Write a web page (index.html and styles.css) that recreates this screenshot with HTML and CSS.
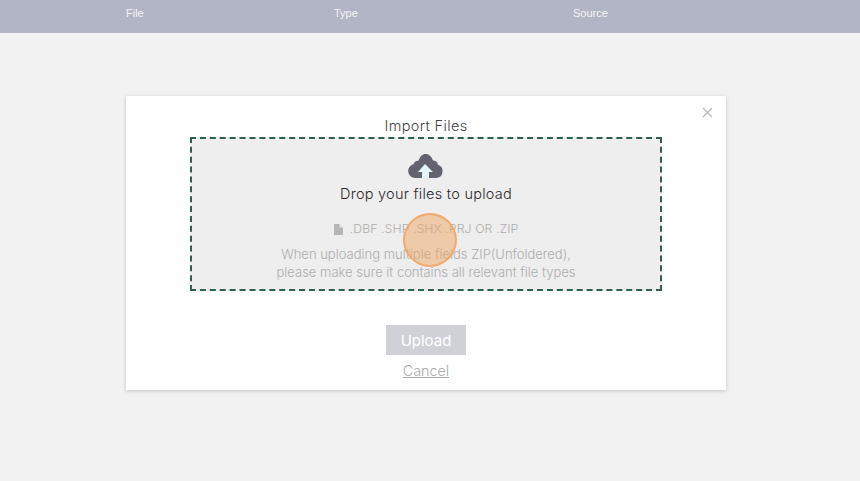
FILE: index.html
```html
<!DOCTYPE html>
<html lang="en">
<head>
    <meta charset="UTF-8">
    <meta name="viewport" content="width=device-width, initial-scale=1.0">
    <title>Import Files</title>
    <link rel="stylesheet" href="styles.css">
</head>
<body>
    <div class="table-header">
        <div class="col-file">File</div>
        <div class="col-type">Type</div>
        <div class="col-source">Source</div>
    </div>

    <div class="modal">
        <button type="button" class="close-btn" aria-label="Close">
            <svg width="11" height="11" viewBox="0 0 11 11"><path d="M1 1l9 9M10 1l-9 9" stroke="#b9b9b9" stroke-width="1.4" fill="none"/></svg>
        </button>
        <h1>Import Files</h1>

        <div class="drop-zone">
            <svg class="cloud-icon" width="35" height="24" viewBox="0 0 35 24">
                <path d="M7 24A7 7 0 0 1 5.500 10.200C6.500 7.500 8.500 6.500 10.500 6.800 12 2.500 14.500 0 17.500 0 21 0 23.500 2.500 25 6.500 27.500 6.500 29.500 8 30 10.800A6.800 6.800 0 0 1 28 24z" fill="#62636f"/>
                <path d="M17 10l-7 8h4v6h7v-6h4z" fill="#e3f5f6"/>
            </svg>
            <div class="drop-title">Drop your files to upload</div>
            <div class="file-types">
                <svg width="9" height="11" viewBox="0 0 9 11"><path d="M0 0h5.500L9 3.500V11H0z" fill="#b5b5b5"/><path d="M5.500 0v3.500H9" fill="#e6e6e6"/></svg>
                <span>.DBF .SHP .SHX .PRJ OR .ZIP</span>
            </div>
            <p class="drop-note">When uploading multiple fields ZIP(Unfoldered),<br>please make sure it contains all relevant file types</p>
        </div>

        <div class="modal-actions">
            <button type="button" class="upload-btn">Upload</button>
            <a href="#" class="cancel-link">Cancel</a>
        </div>
    </div>

    <div class="click-marker"></div>
</body>
</html>
```

FILE: styles.css
```css
* {
    box-sizing: border-box;
    margin: 0;
    padding: 0;
}

body {
    font-family: Inter, 'Noto Sans', sans-serif;
    background: #f2f2f2;
    height: 481px;
    overflow: hidden;
}

.table-header {
    display: grid;
    grid-template-columns: 208px 239px 1fr;
    align-items: center;
    height: 33px;
    padding: 0 0 7px 126px;
    background: #b2b5c5;
    color: #f4f4f7;
    font-family: 'Liberation Sans', Arial, sans-serif;
    font-size: 11px;
}

.modal {
    position: relative;
    display: flex;
    flex-direction: column;
    align-items: center;
    width: 600px;
    height: 294px;
    margin: 63px 0 0 126px;
    padding-top: 21px;
    background: #fff;
    box-shadow: 0 1px 4px rgba(0, 0, 0, 0.2);
}

.close-btn {
    position: absolute;
    top: 11px;
    right: 13px;
    display: flex;
    border: none;
    background: none;
}

h1 {
    color: #444;
    font-size: 14.500px;
    font-weight: 300;
    line-height: 18px;
    letter-spacing: 0.35px;
}

.drop-zone {
    display: flex;
    flex-direction: column;
    align-items: center;
    width: 472px;
    height: 154px;
    margin-top: 2px;
    padding-top: 15px;
    background: #eeeeee;
    border: 2px dashed #2f5f4f;
}

.cloud-icon {
    margin-right: 2px;
}

.drop-title {
    margin-top: 6px;
    color: #2a2a2a;
    font-size: 14.500px;
    font-weight: 300;
    line-height: 20px;
    letter-spacing: 0.25px;
}

.file-types {
    display: flex;
    align-items: center;
    gap: 7px;
    margin-top: 16px;
    color: #adadad;
    font-size: 12.300px;
    font-weight: 300;
    line-height: 18px;
    letter-spacing: 0.08px;
}

.drop-note {
    margin-top: 7px;
    color: #adadad;
    font-size: 13px;
    font-weight: 300;
    line-height: 18px;
    text-align: center;
}

.modal-actions {
    display: flex;
    flex-direction: column;
    align-items: center;
    margin-top: 34px;
}

.upload-btn {
    width: 80px;
    height: 30px;
    border: none;
    background: #d0d1d6;
    color: #fff;
    font-family: inherit;
    font-size: 15px;
}

.cancel-link {
    margin-top: 7px;
    color: #aaa;
    font-size: 14.300px;
    font-weight: 300;
    line-height: 18px;
}

.click-marker {
    position: absolute;
    top: 213px;
    left: 403px;
    width: 54px;
    height: 54px;
    border-radius: 50%;
    background: rgba(240, 165, 100, 0.5);
    border: 2px solid rgba(240, 165, 100, 0.85);
}
```
